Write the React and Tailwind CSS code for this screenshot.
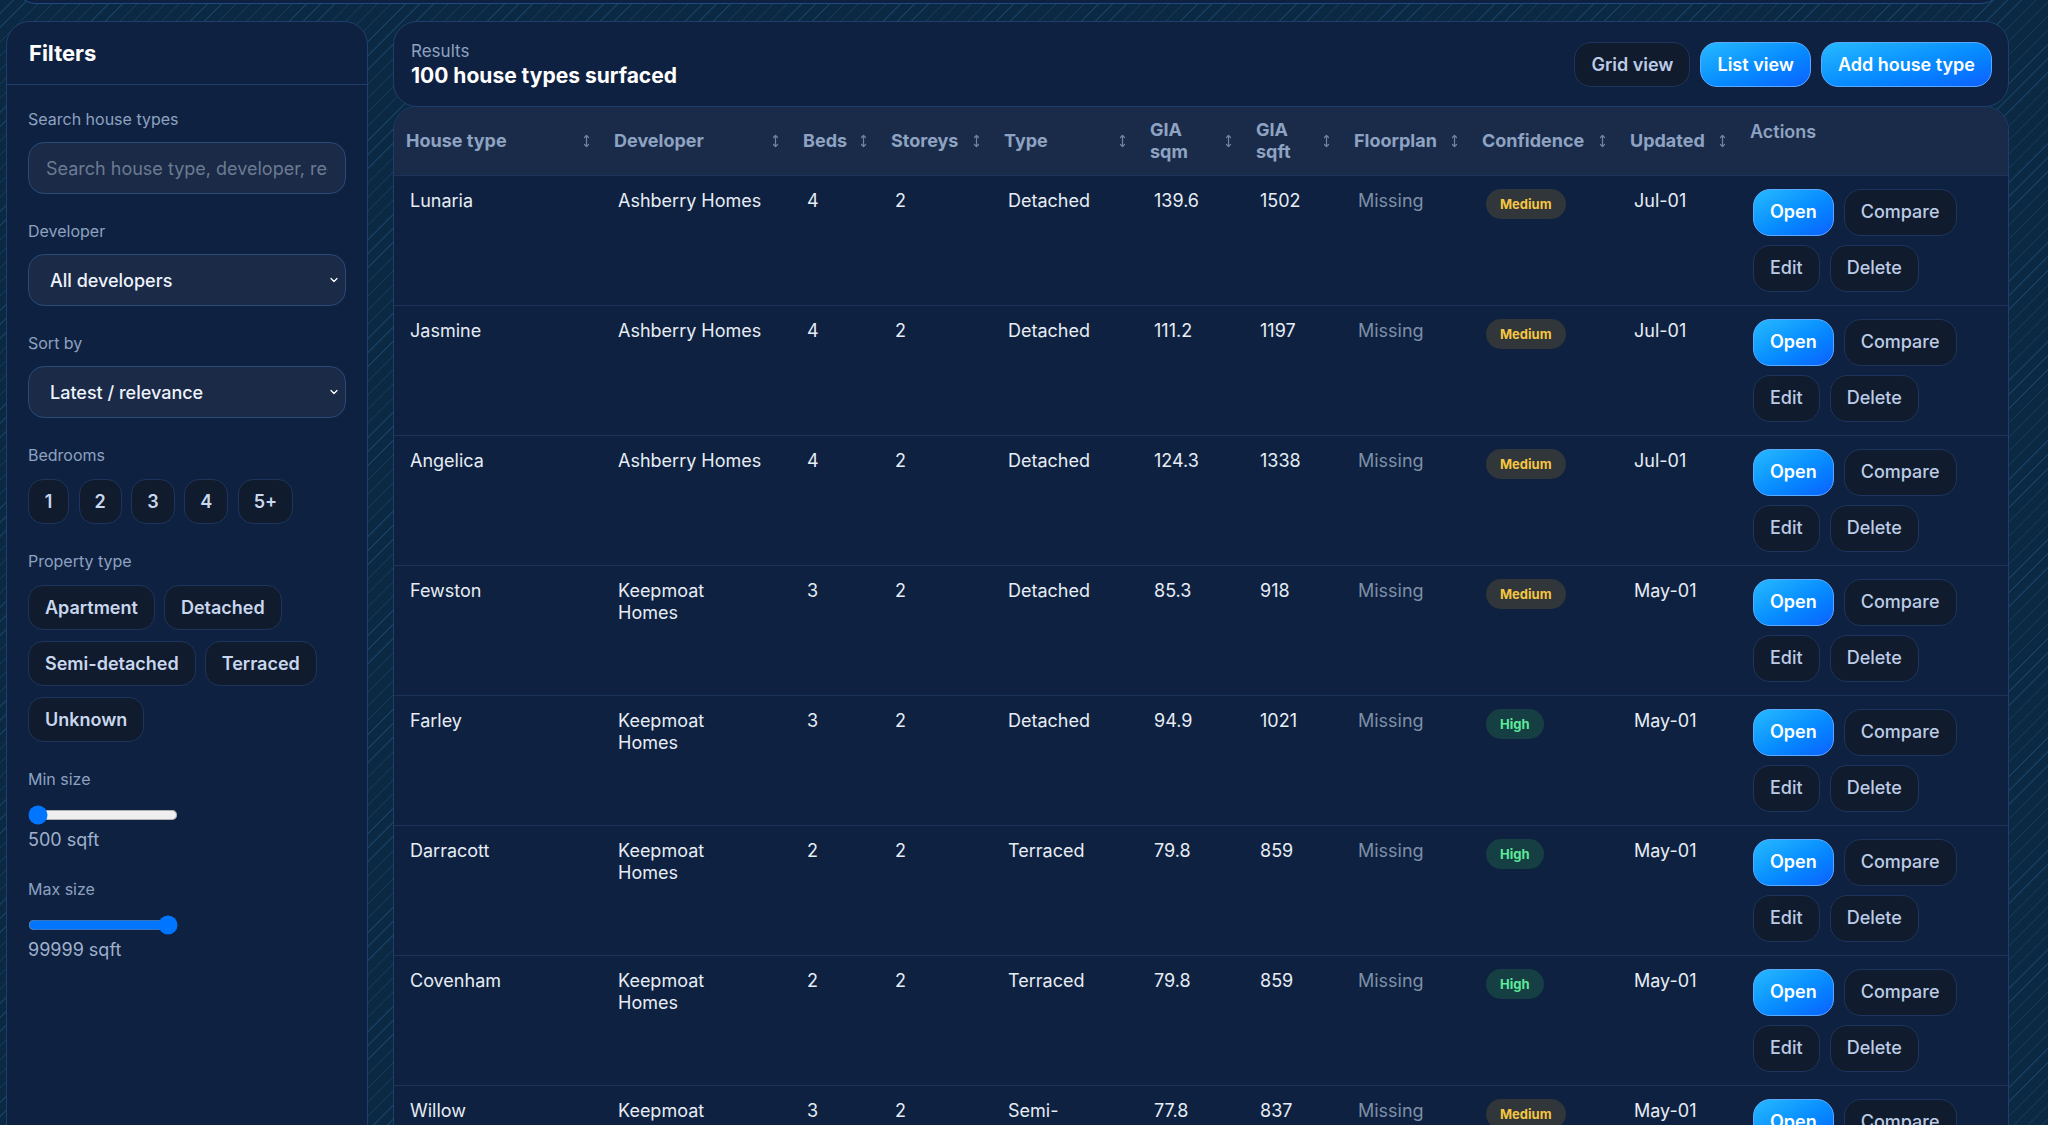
import React from 'react';
import { ChevronDown } from 'lucide-react';

// house types shown in the results list
const houseTypes = [
  { name: 'Lunaria', developer: 'Ashberry Homes', beds: 4, storeys: 2, type: 'Detached', sqm: '139.6', sqft: '1502', confidence: 'Medium', updated: 'Jul-01' },
  { name: 'Jasmine', developer: 'Ashberry Homes', beds: 4, storeys: 2, type: 'Detached', sqm: '111.2', sqft: '1197', confidence: 'Medium', updated: 'Jul-01' },
  { name: 'Angelica', developer: 'Ashberry Homes', beds: 4, storeys: 2, type: 'Detached', sqm: '124.3', sqft: '1338', confidence: 'Medium', updated: 'Jul-01' },
  { name: 'Fewston', developer: 'Keepmoat Homes', beds: 3, storeys: 2, type: 'Detached', sqm: '85.3', sqft: '918', confidence: 'Medium', updated: 'May-01' },
  { name: 'Farley', developer: 'Keepmoat Homes', beds: 3, storeys: 2, type: 'Detached', sqm: '94.9', sqft: '1021', confidence: 'High', updated: 'May-01' },
  { name: 'Darracott', developer: 'Keepmoat Homes', beds: 2, storeys: 2, type: 'Terraced', sqm: '79.8', sqft: '859', confidence: 'High', updated: 'May-01' },
  { name: 'Covenham', developer: 'Keepmoat Homes', beds: 2, storeys: 2, type: 'Terraced', sqm: '79.8', sqft: '859', confidence: 'High', updated: 'May-01' },
  { name: 'Willow', developer: 'Keepmoat Homes', beds: 3, storeys: 2, type: 'Semi-detached', sqm: '77.8', sqft: '837', confidence: 'Medium', updated: 'May-01' },
];

const columns = [
  { label: ['House type'], width: 'w-[208px]' },
  { label: ['Developer'], width: 'w-[189px]' },
  { label: ['Beds'], width: 'w-[88px]' },
  { label: ['Storeys'], width: 'w-[113px]' },
  { label: ['Type'], width: 'w-[146px]' },
  { label: ['GIA', 'sqm'], width: 'w-[106px]' },
  { label: ['GIA', 'sqft'], width: 'w-[98px]' },
  { label: ['Floorplan'], width: 'w-[128px]' },
  { label: ['Confidence'], width: 'w-[148px]' },
  { label: ['Updated'], width: 'w-[120px]' },
];

function SortIcon() {
  return (
    <svg width="7" height="14" viewBox="0 0 7 14" fill="none" stroke="#6f84a3" strokeWidth="1.2" strokeLinecap="round" strokeLinejoin="round" className="shrink-0">
      <path d="M3.5 1.5v11" />
      <path d="M1.5 3.5l2-2 2 2" />
      <path d="M1.5 10.5l2 2 2-2" />
    </svg>
  );
}

function Label({ children }) {
  return <div className="text-[16px] leading-6 text-[#8da2c0]">{children}</div>;
}

function Chip({ children, className = 'px-[16px]' }) {
  return (
    <button className={`h-[45px] min-w-[41px] rounded-[15px] border border-[#1d355c] bg-[#101b2d] text-[18px] font-semibold text-[#c9d7ee] ${className}`}>
      {children}
    </button>
  );
}

function SelectBox({ value }) {
  return (
    <div className="relative mt-[11px]">
      <select
        defaultValue={value}
        className="h-[52px] w-full appearance-none rounded-[16px] border border-[#284a7a] bg-[#1a2a47] pl-[21px] pr-10 text-[18px] font-medium text-[#eef3fb] outline-none"
      >
        <option>{value}</option>
      </select>
      <ChevronDown className="pointer-events-none absolute right-[6px] top-1/2 h-[12px] w-[12px] -translate-y-1/2 text-white" strokeWidth={2.5} />
    </div>
  );
}

function Badge({ level }) {
  const high = level === 'High';
  return (
    <span
      className={
        high
          ? 'inline-flex h-[30px] items-center rounded-full bg-[#153f42] px-[14px] text-[13px] font-bold text-[#5ee89a]'
          : 'inline-flex h-[30px] items-center rounded-full bg-[#30363a] px-[14px] text-[13px] font-bold text-[#f4c542]'
      }
    >
      {level}
    </span>
  );
}

function PrimaryButton({ children, className = '' }) {
  return (
    <button className={`rounded-[17px] border border-[#5aa8ff] bg-linear-to-br from-[#27b9ff] to-[#1160ff] px-[16px] text-[18px] font-semibold text-white ${className}`}>
      {children}
    </button>
  );
}

function GhostButton({ children, className = '' }) {
  return (
    <button className={`rounded-[17px] border border-[#1d355c] bg-[#101b2d] px-[16px] text-[18px] font-medium text-[#bccbe6] ${className}`}>
      {children}
    </button>
  );
}

export default function App() {
  return (
    <div className="min-h-screen overflow-hidden bg-[#0b2942] bg-[repeating-linear-gradient(135deg,#0b2942_0px,#0b2942_9px,#163c60_9px,#163c60_10px)] font-['Inter',sans-serif]">
      {/* bottom edge of the panel above (page is scrolled) */}
      <div className="-mt-[40px] ml-[14px] mr-[45px] h-[44px] rounded-b-[22px] border border-[#1e4a80] bg-[#0f2140]" />

      <div className="grid grid-cols-[362px_1fr] gap-[25px] pl-[6px] pr-[39px] pt-[17px]">
        {/* Filters sidebar */}
        <aside className="rounded-t-[24px] border border-[#1e3f6e] bg-[#0f2140]">
          <div className="flex h-[63px] items-center border-b border-[#1e3f6e] px-[22px] text-[22px] font-bold text-white">
            Filters
          </div>
          <div className="flex flex-col gap-[25px] px-[21px] pt-[22px]">
            <div>
              <Label>Search house types</Label>
              <input
                placeholder="Search house type, developer, region"
                className="mt-[11px] h-[52px] w-full rounded-[16px] border border-[#284a7a] bg-[#1a2a47] px-[17px] text-[18px] text-white outline-none placeholder:text-[#6c7b91]"
              />
            </div>
            <div>
              <Label>Developer</Label>
              <SelectBox value="All developers" />
            </div>
            <div>
              <Label>Sort by</Label>
              <SelectBox value="Latest / relevance" />
            </div>
            <div>
              <Label>Bedrooms</Label>
              <div className="mt-[12px] flex gap-[9.5px]">
                {['1', '2', '3', '4', '5+'].map((b) => (
                  <Chip key={b} className="px-[15px]">{b}</Chip>
                ))}
              </div>
            </div>
            <div>
              <Label>Property type</Label>
              <div className="mt-[12px] flex flex-wrap gap-x-[9px] gap-y-[11px]">
                {['Apartment', 'Detached', 'Semi-detached', 'Terraced', 'Unknown'].map((t) => (
                  <Chip key={t}>{t}</Chip>
                ))}
              </div>
            </div>
            <div>
              <Label>Min size</Label>
              <input type="range" min="500" max="99999" defaultValue="500" className="mt-[11px] block w-[120px] [zoom:1.25]" />
              <div className="mt-[3px] text-[18px] leading-6 text-[#9fb1cc]">500 sqft</div>
            </div>
            <div>
              <Label>Max size</Label>
              <input type="range" min="500" max="99999" defaultValue="99999" className="mt-[11px] block w-[120px] [zoom:1.25]" />
              <div className="mt-[3px] text-[18px] leading-6 text-[#9fb1cc]">99999 sqft</div>
            </div>
          </div>
        </aside>

        {/* Results */}
        <main>
          <div className="flex h-[86px] items-center justify-between rounded-[24px] border border-[#1e3f6e] bg-[#0f2140] pl-[17px] pr-[16px]">
            <div>
              <div className="text-[17px] leading-6 text-[#8da2c0]">Results</div>
              <div className="text-[21px] font-bold leading-[26px] text-white">100 house types surfaced</div>
            </div>
            <div className="flex gap-[10px]">
              <GhostButton className="h-[45px] rounded-[16px] px-[16px] font-semibold">Grid view</GhostButton>
              <PrimaryButton className="h-[45px] rounded-[16px] px-[16px]">List view</PrimaryButton>
              <PrimaryButton className="h-[45px] rounded-[16px] px-[16px]">Add house type</PrimaryButton>
            </div>
          </div>

          <div className="-mt-[1px] overflow-hidden rounded-t-[24px] border border-[#1e3f6e] bg-[#0f2140]">
            <table className="w-full table-fixed border-collapse">
              <colgroup>
                {columns.map((c) => (
                  <col key={c.label.join(' ')} className={c.width} />
                ))}
                <col />
              </colgroup>
              <thead>
                <tr className="h-[68px] bg-[#1a2b49]">
                  {columns.map((c) => (
                    <th key={c.label.join(' ')} className="px-[12px] text-left align-middle">
                      <div className="flex items-center justify-between gap-2 text-[18px] font-bold leading-[22px] text-[#8ea3c2]">
                        <span className="whitespace-nowrap">
                          {c.label.map((l) => (
                            <span key={l} className="block">
                              {l}
                            </span>
                          ))}
                        </span>
                        <SortIcon />
                      </div>
                    </th>
                  ))}
                  <th className="px-[12px] pt-[14px] text-left align-top text-[18px] font-semibold leading-[22px] text-[#8ea3c2]">
                    Actions
                  </th>
                </tr>
              </thead>
              <tbody>
                {houseTypes.map((h) => (
                  <tr key={h.name} className="border-t border-[#1b3358] text-[18px] leading-[22px] text-[#e6edf5]">
                    <td className="pl-[16px] pt-[14px] align-top">{h.name}</td>
                    <td className="pl-[16px] pt-[14px] align-top">
                      <div className="max-w-[146px]">{h.developer}</div>
                    </td>
                    <td className="pl-[16px] pt-[14px] align-top">{h.beds}</td>
                    <td className="pl-[16px] pt-[14px] align-top">{h.storeys}</td>
                    <td className="pl-[16px] pr-[16px] pt-[14px] align-top">{h.type}</td>
                    <td className="pl-[16px] pt-[14px] align-top">{h.sqm}</td>
                    <td className="pl-[16px] pt-[14px] align-top">{h.sqft}</td>
                    <td className="pl-[16px] pt-[14px] align-top text-[#7d8fa8]">Missing</td>
                    <td className="pl-[16px] pt-[13px] align-top">
                      <Badge level={h.confidence} />
                    </td>
                    <td className="pl-[16px] pt-[14px] align-top">{h.updated}</td>
                    <td className="pb-[13px] pl-[15px] pr-[16px] pt-[13px] align-top">
                      <div className="flex flex-wrap gap-x-[10px] gap-y-[9px]">
                        <PrimaryButton className="h-[47px]">Open</PrimaryButton>
                        <GhostButton className="h-[47px]">Compare</GhostButton>
                        <GhostButton className="h-[47px]">Edit</GhostButton>
                        <GhostButton className="h-[47px]">Delete</GhostButton>
                      </div>
                    </td>
                  </tr>
                ))}
              </tbody>
            </table>
          </div>
        </main>
      </div>
    </div>
  );
}
